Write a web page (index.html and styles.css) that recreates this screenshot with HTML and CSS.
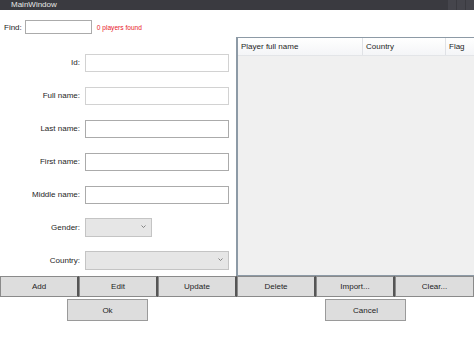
FILE: index.html
```html
<!DOCTYPE html>
<html lang="en">
<head>
  <meta charset="UTF-8">
  <title>MainWindow</title>
  <link rel="stylesheet" href="styles.css">
</head>
<body>

<div class="titlebar">
  <span class="title">MainWindow</span>
  <div class="caption-buttons">
    <span></span><span></span><span></span>
  </div>
</div>

<div class="main">
  <div class="form-side">
    <div class="find-row">
      <label>Find:</label>
      <input class="find-box" type="text">
      <span class="found">0 players found</span>
    </div>

    <div class="form">
      <label>Id:</label>
      <input type="text" class="ro">
      <label>Full name:</label>
      <input type="text" class="ro">
      <label>Last name:</label>
      <input type="text">
      <label>First name:</label>
      <input type="text">
      <label>Middle name:</label>
      <input type="text">
      <label>Gender:</label>
      <div class="combo small">
        <svg class="arrow" width="5" height="3" viewBox="0 0 5 3"><path d="M0.5 0.5 L2.5 2.5 L4.5 0.5" fill="none" stroke="#777" stroke-width="0.9"/></svg>
      </div>
      <label>Country:</label>
      <div class="combo">
        <svg class="arrow" width="5" height="3" viewBox="0 0 5 3"><path d="M0.5 0.5 L2.5 2.5 L4.5 0.5" fill="none" stroke="#777" stroke-width="0.9"/></svg>
      </div>
    </div>
  </div>

  <div class="grid-side">
    <div class="grid">
      <div class="grid-head">
        <div class="col c1">Player full name</div>
        <div class="col c2">Country</div>
        <div class="col c3">Flag</div>
      </div>
    </div>
  </div>
</div>

<div class="actions">
  <button>Add</button>
  <button>Edit</button>
  <button>Update</button>
  <button>Delete</button>
  <button>Import...</button>
  <button>Clear...</button>
</div>

<div class="dialog">
  <button>Ok</button>
  <button>Cancel</button>
</div>

</body>
</html>
```

FILE: styles.css
```css
body {
  margin: 0;
  width: 474px;
  height: 337px;
  background: #fff;
  font-family: "Liberation Sans", Arial, sans-serif;
  font-size: 8px;
  color: #1e1e1e;
  overflow: hidden;
}

.titlebar {
  height: 10px;
  background: #3a3a40;
  display: flex;
  justify-content: space-between;
  align-items: center;
}

.title {
  color: #e6e6e6;
  font-size: 8px;
  padding-left: 11px;
  line-height: 10px;
}

.caption-buttons {
  display: flex;
  gap: 1px;
  height: 10px;
}

.caption-buttons span {
  width: 8px;
  background: #45454c;
}

.main {
  display: grid;
  grid-template-columns: 236px 238px;
  height: 266px;
}

.form-side {
  padding-top: 10px;
}

.find-row {
  display: flex;
  align-items: center;
  height: 14px;
  padding-left: 4px;
}

.find-row label {
  margin-right: 3px;
}

.find-box {
  width: 67px;
  height: 14px;
}

.found {
  color: #e8202a;
  font-size: 6.6px;
  margin-left: 5px;
}

input {
  box-sizing: border-box;
  margin: 0;
  border: 1px solid #ababab;
  background: #fff;
  padding: 0;
}

input.ro {
  border-color: #d2d2d2;
}

.form {
  margin-top: 12px;
  display: grid;
  grid-template-columns: 80px 144px;
  grid-auto-rows: 33px;
  column-gap: 5px;
  align-items: center;
}

.form label {
  text-align: right;
}

.form input {
  width: 144px;
  height: 18px;
}

.combo {
  box-sizing: border-box;
  width: 144px;
  height: 19px;
  border: 1px solid #c4c4c4;
  background: #e6e6e6;
  display: flex;
  justify-content: flex-end;
  align-items: center;
  padding-right: 5px;
}

.combo.small {
  width: 67px;
}

.arrow {
  display: block;
  margin-top: -2px;
}

.grid-side {
  padding-top: 27px;
}

.grid {
  box-sizing: border-box;
  height: 239px;
  border: 1px solid #8d9aa6;
  border-left-width: 2px;
  border-right: none;
  background: #f0f0f0;
}

.grid-head {
  display: flex;
  height: 17px;
  background: linear-gradient(#ffffff, #f4f5f7);
  border-bottom: 1px solid #e3e5e8;
}

.col {
  box-sizing: border-box;
  padding-left: 3px;
  line-height: 17px;
  border-right: 1px solid #e0e2e6;
}

.c1 { width: 125px; }
.c2 { width: 83px; }
.c3 { flex: 1; border-right: none; }

button {
  font-family: "Liberation Sans", Arial, sans-serif;
  font-size: 8px;
  color: #1e1e1e;
  background: #dddddd;
  border: 1px solid #707070;
  margin: 0;
  padding: 0;
}

.actions {
  display: grid;
  grid-template-columns: repeat(6, 1fr);
  height: 21px;
}

.actions button {
  border-color: #8a8a8a;
  border-right: 2px solid #555;
}

.actions button:last-child {
  border-right: 1px solid #8a8a8a;
}

.dialog {
  display: flex;
  gap: 177px;
  padding-left: 67px;
  margin-top: 2px;
}

.dialog button {
  width: 81px;
  height: 22px;
  border-color: #9a9a9a;
}
```
